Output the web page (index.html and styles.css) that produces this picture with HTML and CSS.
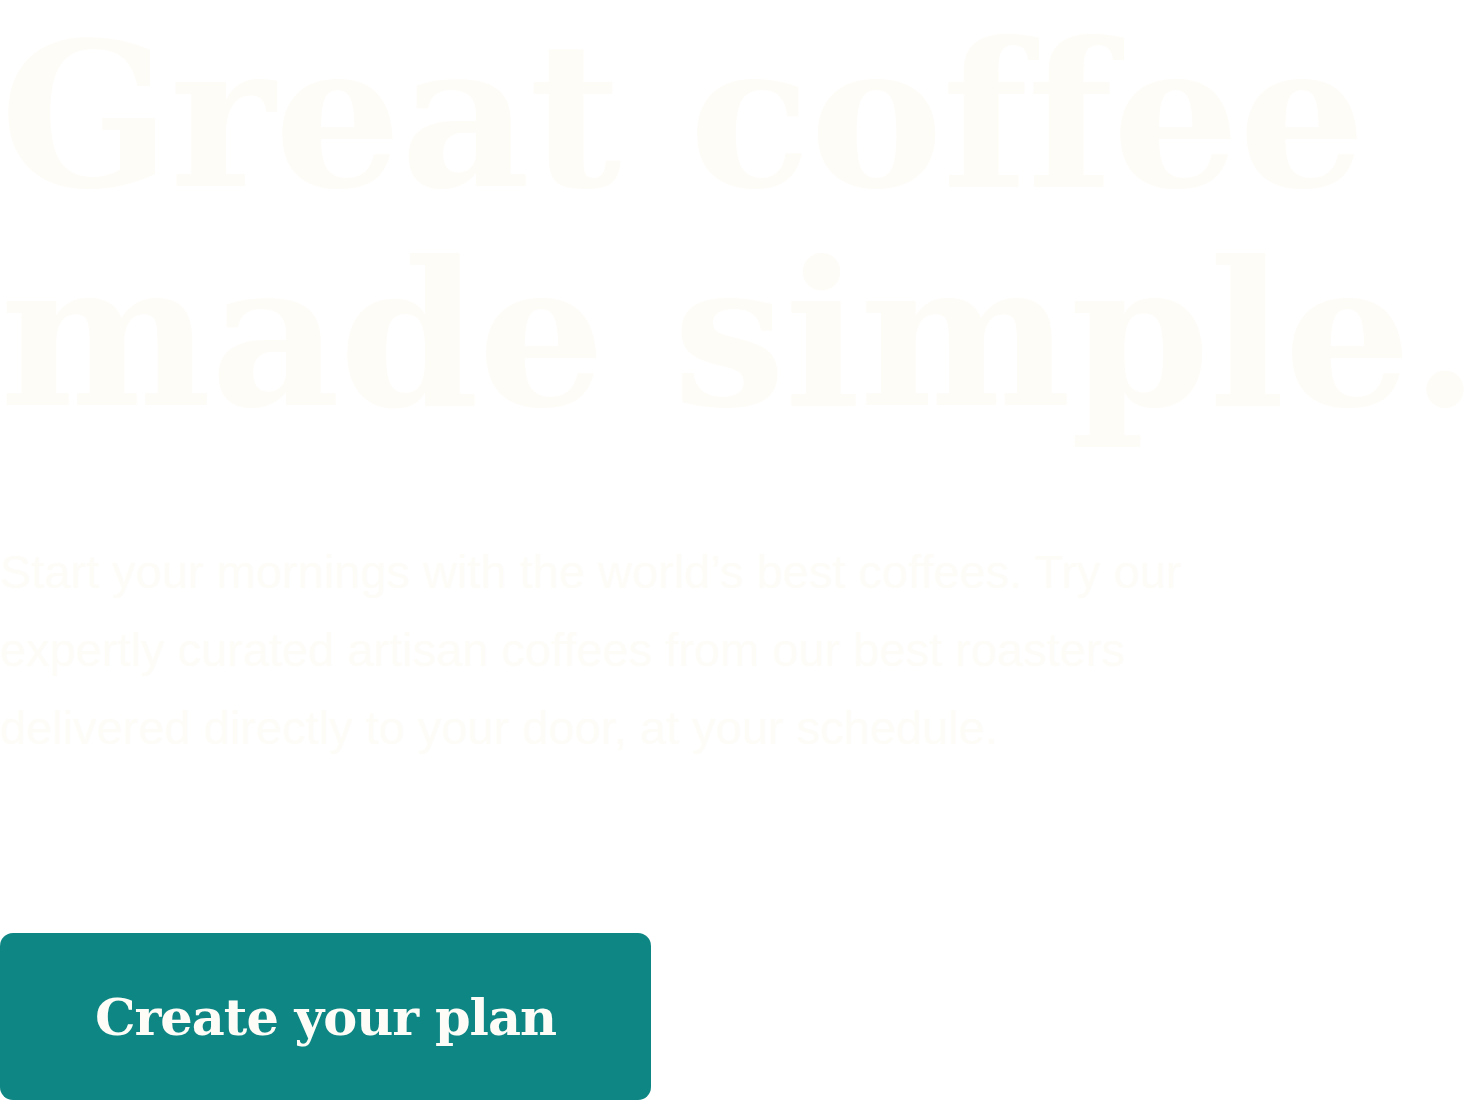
FILE: index.html
```html
<!DOCTYPE html>
<html lang="en">
<head>
<meta charset="utf-8">
<title>Coffeeroasters</title>
<link rel="stylesheet" href="styles.css">
</head>
<body>
<section class="hero">
  <h1 class="hero-title"><span class="hero-line">Great coffee</span> <span class="hero-line">made simple.</span></h1>
  <p class="hero-text">Start your mornings with the world’s best coffees. Try our expertly curated artisan coffees from our best roasters delivered directly to your door, at your schedule.</p>
  <a class="hero-button" href="#">Create your plan</a>
</section>
</body>
</html>
```

FILE: styles.css
```css
html, body {
  margin: 0;
  padding: 0;
  background: #ffffff;
}
.hero {
  display: flex;
  flex-direction: column;
  align-items: flex-start;
}
.hero-title {
  margin: 0;
  padding-top: 6px;
  font-family: "DejaVu Serif", serif;
  font-weight: 900;
  font-size: 200px;
  line-height: 219px;
  letter-spacing: -1px;
  color: #fefcf7;
}
.hero-line {
  display: block;
  white-space: nowrap;
}
.hero-text {
  margin: 89px 0 0 0;
  max-width: 1240px;
  font-family: "Liberation Sans", sans-serif;
  font-size: 47px;
  line-height: 78px;
  color: #fefcf7;
}
.hero-button {
  margin-top: 166px;
  width: 651px;
  height: 167px;
  display: flex;
  align-items: center;
  justify-content: center;
  background: #0e8784;
  border-radius: 13px;
  color: #fefcf7;
  text-decoration: none;
  font-family: "DejaVu Serif", serif;
  font-weight: 700;
  font-size: 51px;
  letter-spacing: -1px;
}
```
